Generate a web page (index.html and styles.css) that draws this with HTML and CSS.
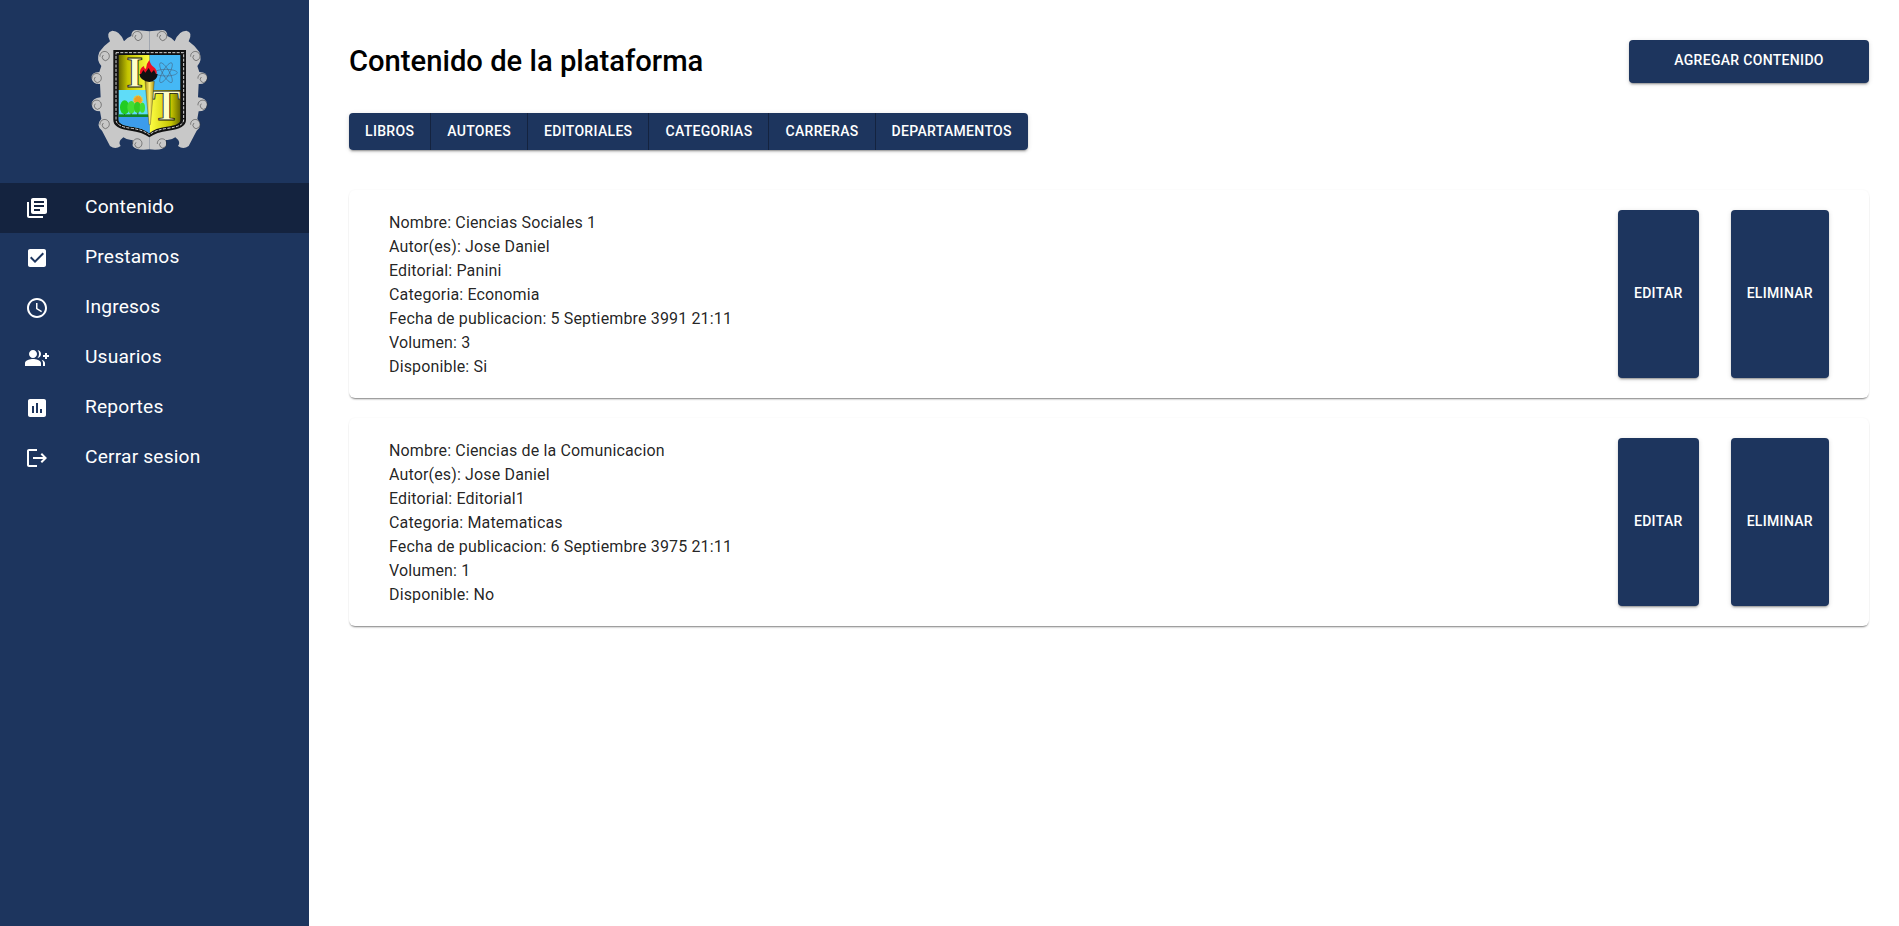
FILE: index.html
```html
<!DOCTYPE html>
<html lang="es">
<head>
    <meta charset="UTF-8">
    <meta name="viewport" content="width=device-width, initial-scale=1.0">
    <title>Contenido de la plataforma</title>
    <link rel="stylesheet" href="styles.css">
</head>
<body>
    <aside class="sidebar">
        <div class="logo">
            <svg width="120" height="122" viewBox="90 57 360 366">
                <defs>
                    <path id="frameHalf" d="M268 64 L228 60 Q214 62 214 78 Q202 82 192 94 Q180 62 157 62 Q136 66 150 94 Q130 108 118 126 Q108 150 124 168 L118 186 Q92 186 95 206 Q100 224 120 222 L122 262 Q95 264 95 284 Q98 304 120 304 L124 326 Q106 346 126 362 L150 408 Q166 420 182 408 Q172 396 190 382 Q204 392 218 390 L218 408 Q226 422 268 418 Z"/>
                    <path id="curl" d="M-14 2 A14 14 0 1 1 9 11 A9 9 0 1 1 -4 -3" fill="none" stroke="#333" stroke-width="1.6"/>
                    <linearGradient id="goldL" x1="0" x2="1" y1="0" y2="0">
                        <stop offset="0" stop-color="#666600"/>
                        <stop offset="0.3" stop-color="#c4c400"/>
                        <stop offset="1" stop-color="#ffff44"/>
                    </linearGradient>
                    <linearGradient id="goldR" x1="0" x2="1" y1="0" y2="0">
                        <stop offset="0" stop-color="#ffff44"/>
                        <stop offset="0.7" stop-color="#c4c400"/>
                        <stop offset="1" stop-color="#666600"/>
                    </linearGradient>
                    <linearGradient id="handle" x1="0" x2="1" y1="0" y2="0">
                        <stop offset="0" stop-color="#a08a10"/>
                        <stop offset="0.5" stop-color="#fff070"/>
                        <stop offset="1" stop-color="#a08a10"/>
                    </linearGradient>
                    <clipPath id="shieldClip">
                        <path d="M175 135 H362 V328 Q362 346 320 350 Q285 354 268 370 Q250 354 216 350 Q175 346 175 328 Z"/>
                    </clipPath>
                </defs>

                <use href="#frameHalf" fill="#c8c8c8"/>
                <use href="#frameHalf" fill="#c8c8c8" transform="translate(536 0) scale(-1 1)"/>

                <use href="#curl" x="232" y="78"/>
                <use href="#curl" x="306" y="78"/>
                <use href="#curl" x="134" y="138"/>
                <use href="#curl" x="406" y="138"/>
                <use href="#curl" x="110" y="204"/>
                <use href="#curl" x="428" y="204"/>
                <use href="#curl" x="110" y="284"/>
                <use href="#curl" x="428" y="284"/>
                <use href="#curl" x="134" y="342"/>
                <use href="#curl" x="406" y="342"/>
                <use href="#curl" x="232" y="400"/>
                <use href="#curl" x="306" y="400"/>

                <path d="M160 120 H378 V330 Q378 356 325 362 Q290 366 268 382 Q246 366 212 362 Q160 356 160 330 Z" fill="#111"/>
                <path d="M168 128 H371 V329 Q371 350 323 355 Q288 359 268 374 Q248 359 214 355 Q168 350 168 329 Z" fill="none" stroke="#fff" stroke-width="2.5" stroke-dasharray="9 4"/>

                <g clip-path="url(#shieldClip)">
                    <rect x="175" y="135" width="94" height="105" fill="url(#goldL)"/>
                    <rect x="269" y="135" width="93" height="105" fill="#45b8f5"/>
                    <rect x="175" y="240" width="94" height="130" fill="#5fdcf8"/>
                    <rect x="269" y="240" width="93" height="130" fill="url(#goldR)"/>

                    <circle cx="234" cy="270" r="13" fill="#f0a020" stroke="#e8d040" stroke-width="5" stroke-dasharray="3 3"/>
                    <rect x="192" y="300" width="3" height="18" fill="#333"/>
                    <rect x="212" y="300" width="3" height="18" fill="#333"/>
                    <rect x="232" y="300" width="3" height="18" fill="#333"/>
                    <ellipse cx="194" cy="292" rx="14" ry="21" fill="#22cc22"/>
                    <ellipse cx="214" cy="292" rx="12" ry="19" fill="#44dd33"/>
                    <ellipse cx="232" cy="292" rx="10" ry="17" fill="#33cc22"/>
                    <ellipse cx="247" cy="293" rx="8" ry="15" fill="#44dd33"/>
                    <rect x="175" y="313" width="94" height="8" fill="#118822"/>
                    <rect x="175" y="321" width="94" height="50" fill="#3c9cec"/>

                    <g fill="none" stroke="#445" stroke-width="1.2">
                        <ellipse cx="318" cy="188" rx="34" ry="10"/>
                        <ellipse cx="318" cy="188" rx="34" ry="10" transform="rotate(60 318 188)"/>
                        <ellipse cx="318" cy="188" rx="34" ry="10" transform="rotate(120 318 188)"/>
                    </g>
                </g>

                <text class="logo-letter" x="224" y="232" text-anchor="middle">I</text>
                <text class="logo-letter" x="319" y="331" text-anchor="middle">T</text>

                <path d="M255 214 H283 L271 344 H267 Z" fill="url(#handle)" stroke="#222" stroke-width="1"/>
                <path d="M238 192 H293 Q292 212 268 216 Q240 212 238 192 Z" fill="#111"/>
                <path d="M240 192 Q238 174 252 168 Q252 178 258 176 Q258 162 268 150 Q272 166 280 170 Q292 178 290 192 Z" fill="#ee1122"/>
                <path d="M243 192 L250 180 L256 188 L266 174 L274 188 L282 180 L288 192 Z" fill="#111"/>
            </svg>
        </div>

        <nav class="menu">
            <a class="menu-item active" href="#">
                <svg class="menu-icon" viewBox="0 0 24 24"><path d="M4 6H2v14c0 1.1.9 2 2 2h14v-2H4V6zm16-4H8c-1.1 0-2 .9-2 2v12c0 1.1.9 2 2 2h12c1.1 0 2-.9 2-2V4c0-1.1-.9-2-2-2zm-1 9H9V9h10v2zm-4 4H9v-2h6v2zm4-8H9V5h10v2z"/></svg>
                <span>Contenido</span>
            </a>
            <a class="menu-item" href="#">
                <svg class="menu-icon" viewBox="0 0 24 24"><path d="M19 3H5c-1.11 0-2 .9-2 2v14c0 1.1.89 2 2 2h14c1.11 0 2-.9 2-2V5c0-1.1-.89-2-2-2zm-9 14l-5-5 1.41-1.41L10 14.17l7.59-7.59L19 8l-9 9z"/></svg>
                <span>Prestamos</span>
            </a>
            <a class="menu-item" href="#">
                <svg class="menu-icon" viewBox="0 0 24 24"><path d="M11.99 2C6.47 2 2 6.48 2 12s4.47 10 9.99 10C17.52 22 22 17.52 22 12S17.52 2 11.99 2zM12 20c-4.42 0-8-3.58-8-8s3.58-8 8-8 8 3.58 8 8-3.58 8-8 8z"/><path d="M12.5 7H11v6l5.25 3.15.75-1.23-4.5-2.67z"/></svg>
                <span>Ingresos</span>
            </a>
            <a class="menu-item" href="#">
                <svg class="menu-icon" viewBox="0 0 24 24"><path d="M24 9v2h-2v2h-2v-2h-2V9h2V7h2v2h2zM8 12c2.21 0 4-1.79 4-4s-1.79-4-4-4-4 1.79-4 4 1.79 4 4 4zm0 1c-2.67 0-8 1.34-8 4v3h16v-3c0-2.66-5.33-4-8-4zm4.51-8.95C13.43 5.11 14 6.49 14 8s-.57 2.89-1.49 3.95C14.47 11.7 16 10.04 16 8s-1.53-3.7-3.49-3.95zm4.02 9.78C17.42 14.66 18 15.7 18 17v3h2v-3c0-1.45-1.59-2.51-3.47-3.17z"/></svg>
                <span>Usuarios</span>
            </a>
            <a class="menu-item" href="#">
                <svg class="menu-icon" viewBox="0 0 24 24"><path d="M19 3H5c-1.1 0-2 .9-2 2v14c0 1.1.9 2 2 2h14c1.1 0 2-.9 2-2V5c0-1.1-.9-2-2-2zM9 17H7v-7h2v7zm4 0h-2V7h2v10zm4 0h-2v-4h2v4z"/></svg>
                <span>Reportes</span>
            </a>
            <a class="menu-item" href="#">
                <svg class="menu-icon" viewBox="0 0 24 24"><path d="M17 7l-1.41 1.41L18.17 11H8v2h10.17l-2.58 2.58L17 17l5-5zM4 5h8V3H4c-1.1 0-2 .9-2 2v14c0 1.1.9 2 2 2h8v-2H4V5z"/></svg>
                <span>Cerrar sesion</span>
            </a>
        </nav>
    </aside>

    <main class="content">
        <div class="header">
            <h1>Contenido de la plataforma</h1>
            <button class="btn btn-add">AGREGAR CONTENIDO</button>
        </div>

        <div class="tabs">
            <button class="tab">LIBROS</button>
            <button class="tab">AUTORES</button>
            <button class="tab">EDITORIALES</button>
            <button class="tab">CATEGORIAS</button>
            <button class="tab">CARRERAS</button>
            <button class="tab">DEPARTAMENTOS</button>
        </div>

        <div class="card">
            <div class="card-info">
                <div>Nombre: Ciencias Sociales 1</div>
                <div>Autor(es): Jose Daniel</div>
                <div>Editorial: Panini</div>
                <div>Categoria: Economia</div>
                <div>Fecha de publicacion: 5 Septiembre 3991 21:11</div>
                <div>Volumen: 3</div>
                <div>Disponible: Si</div>
            </div>
            <div class="card-actions">
                <button class="btn">EDITAR</button>
                <button class="btn">ELIMINAR</button>
            </div>
        </div>

        <div class="card">
            <div class="card-info">
                <div>Nombre: Ciencias de la Comunicacion</div>
                <div>Autor(es): Jose Daniel</div>
                <div>Editorial: Editorial1</div>
                <div>Categoria: Matematicas</div>
                <div>Fecha de publicacion: 6 Septiembre 3975 21:11</div>
                <div>Volumen: 1</div>
                <div>Disponible: No</div>
            </div>
            <div class="card-actions">
                <button class="btn">EDITAR</button>
                <button class="btn">ELIMINAR</button>
            </div>
        </div>
    </main>
</body>
</html>
```

FILE: styles.css
```css
* {
    box-sizing: border-box;
}

body {
    display: flex;
    min-height: 926px;
    margin: 0;
    font-family: 'Roboto', sans-serif;
    background-color: #ffffff;
    color: rgba(0, 0, 0, 0.87);
}

.sidebar {
    flex: 0 0 309px;
    background-color: #1d355e;
}

.logo {
    padding: 29px 0 0 90px;
    height: 183px;
}

.logo svg {
    display: block;
}

.logo-letter {
    font-family: 'Liberation Serif', serif;
    font-weight: 700;
    font-size: 130px;
    fill: #ffffc8;
    stroke: #111;
    stroke-width: 2.5;
}

.menu-item {
    display: flex;
    align-items: center;
    height: 50px;
    padding-left: 25px;
    color: #ffffff;
    font-size: 19.2px;
    font-weight: 430;
    letter-spacing: 0.00938em;
    text-decoration: none;
}

.menu-item span {
    margin-bottom: 3px;
}

.menu-item.active {
    background-color: #14233f;
}

.menu-icon {
    width: 24px;
    height: 24px;
    margin-right: 36px;
    fill: #ffffff;
}

.content {
    flex: 1;
    padding: 40px 30px 0 40px;
}

.header {
    display: flex;
    align-items: center;
    justify-content: space-between;
}

h1 {
    margin: 0 0 2px;
    font-size: 29.2px;
    font-weight: 500;
    color: #000000;
}

.btn,
.tab {
    border: none;
    background-color: #1d355e;
    color: #ffffff;
    font-family: 'Roboto', sans-serif;
    font-size: 14px;
    font-weight: 470;
    letter-spacing: 0.32px;
    cursor: pointer;
}

.btn {
    padding: 0 16px 3px;
    border-radius: 4px;
    box-shadow: 0 3px 1px -2px rgba(0, 0, 0, 0.2), 0 2px 2px 0 rgba(0, 0, 0, 0.14), 0 1px 5px 0 rgba(0, 0, 0, 0.12);
}

.btn-add {
    width: 240px;
    height: 43px;
}

.tabs {
    display: inline-flex;
    margin-top: 30px;
    border-radius: 4px;
    box-shadow: 0 3px 1px -2px rgba(0, 0, 0, 0.2), 0 2px 2px 0 rgba(0, 0, 0, 0.14), 0 1px 5px 0 rgba(0, 0, 0, 0.12);
}

.tab {
    height: 37px;
    padding: 0 16px 2px;
    border-right: 1px solid #14233f;
}

.tab:first-child {
    border-radius: 4px 0 0 4px;
}

.tab:last-child {
    border-right: none;
    border-radius: 0 4px 4px 0;
}

.tabs + .card {
    margin-top: 40px;
}

.card {
    display: flex;
    justify-content: space-between;
    height: 208px;
    margin-bottom: 20px;
    padding: 20px 40px;
    border-radius: 6px;
    box-shadow: 0 2px 2px -1px rgba(0, 0, 0, 0.5), 0 0 2px 0 rgba(0, 0, 0, 0.06);
}

.card-info {
    padding-top: 1px;
    font-size: 16px;
    line-height: 24px;
    letter-spacing: 0.00938em;
}

.card-actions {
    display: flex;
    gap: 32px;
}
```
